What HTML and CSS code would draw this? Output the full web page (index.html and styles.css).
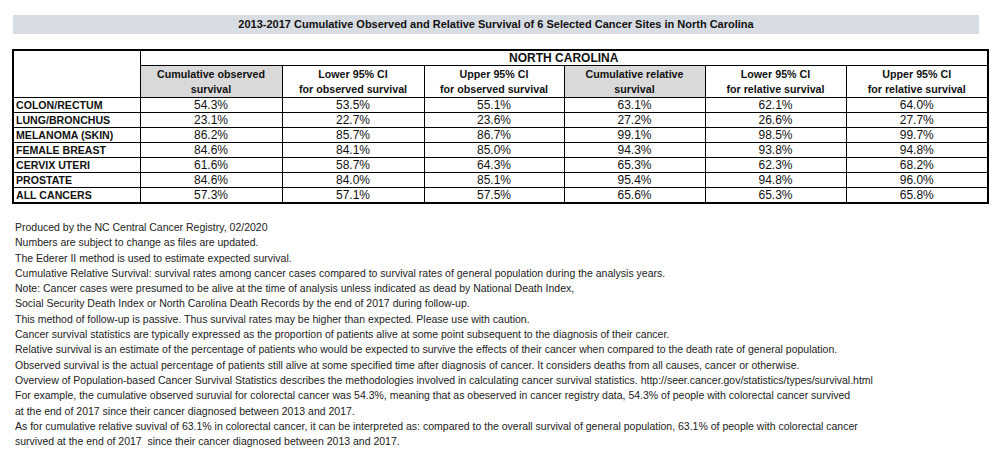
FILE: index.html
```html
<!DOCTYPE html>
<html>

<head lang="en">
    <meta charset="UTF-8">
    <title>NC Cancer Survival</title>
    <link rel="stylesheet" href="styles.css">
</head>

<body>
    <div class="report-title">2013-2017 Cumulative Observed and Relative Survival of 6 Selected Cancer Sites in North Carolina</div>
    <table class="survival-table">
        <colgroup>
            <col class="col-site">
            <col class="col-142">
            <col class="col-142">
            <col class="col-140">
            <col class="col-141">
            <col class="col-141">
            <col class="col-142">
        </colgroup>
        <thead>
            <tr>
                <th class="blank" rowspan="2"></th>
                <th class="state" colspan="6">NORTH CAROLINA</th>
            </tr>
            <tr class="head-row">
                <th class="shade">Cumulative observed<br>survival</th>
                <th>Lower 95% CI<br>for observed survival</th>
                <th>Upper 95% CI<br>for observed survival</th>
                <th class="shade">Cumulative relative<br>survival</th>
                <th>Lower 95% CI<br>for relative survival</th>
                <th>Upper 95% CI<br>for relative survival</th>
            </tr>
        </thead>
        <tbody>
            <tr><th>COLON/RECTUM</th><td>54.3%</td><td>53.5%</td><td>55.1%</td><td>63.1%</td><td>62.1%</td><td>64.0%</td></tr>
            <tr><th>LUNG/BRONCHUS</th><td>23.1%</td><td>22.7%</td><td>23.6%</td><td>27.2%</td><td>26.6%</td><td>27.7%</td></tr>
            <tr><th>MELANOMA (SKIN)</th><td>86.2%</td><td>85.7%</td><td>86.7%</td><td>99.1%</td><td>98.5%</td><td>99.7%</td></tr>
            <tr><th>FEMALE BREAST</th><td>84.6%</td><td>84.1%</td><td>85.0%</td><td>94.3%</td><td>93.8%</td><td>94.8%</td></tr>
            <tr><th>CERVIX UTERI</th><td>61.6%</td><td>58.7%</td><td>64.3%</td><td>65.3%</td><td>62.3%</td><td>68.2%</td></tr>
            <tr><th>PROSTATE</th><td>84.6%</td><td>84.0%</td><td>85.1%</td><td>95.4%</td><td>94.8%</td><td>96.0%</td></tr>
            <tr><th>ALL CANCERS</th><td>57.3%</td><td>57.1%</td><td>57.5%</td><td>65.6%</td><td>65.3%</td><td>65.8%</td></tr>
        </tbody>
    </table>
    <!-- notes under the table -->
    <div class="notes">
        <p>Produced by the NC Central Cancer Registry, 02/2020</p>
        <p>Numbers are subject to change as files are updated.</p>
        <p>The Ederer II method is used to estimate expected survival.</p>
        <p>Cumulative Relative Survival: survival rates among cancer cases compared to survival rates of general population during the analysis years.</p>
        <p>Note: Cancer cases were presumed to be alive at the time of analysis unless indicated as dead by National Death Index,</p>
        <p>Social Security Death Index or North Carolina Death Records by the end of 2017 during follow-up.</p>
        <p>This method of follow-up is passive. Thus survival rates may be higher than expected. Please use with caution.</p>
        <p>Cancer survival statistics are typically expressed as the proportion of patients alive at some point subsequent to the diagnosis of their cancer.</p>
        <p>Relative survival is an estimate of the percentage of patients who would be expected to survive the effects of their cancer when compared to the death rate of general population.</p>
        <p>Observed survival is the actual percentage of patients still alive at some specified time after diagnosis of cancer. It considers deaths from all causes, cancer or otherwise.</p>
        <p>Overview of Population-based Cancer Survival Statistics describes the methodologies involved in calculating cancer survival statistics. http://seer.cancer.gov/statistics/types/survival.html</p>
        <p>For example, the cumulative observed suruvial for colorectal cancer was 54.3%, meaning that as obeserved in cancer registry data, 54.3% of people with colorectal cancer survived</p>
        <p>at the end of 2017 since their cancer diagnosed between 2013 and 2017.</p>
        <p>As for cumulative relative suvival of 63.1% in colorectal cancer, it can be interpreted as: compared to the overall survival of general population, 63.1% of people with colorectal cancer</p>
        <p>survived at the end of 2017&nbsp; since their cancer diagnosed between 2013 and 2017.</p>
    </div>
</body>

</html>
```

FILE: styles.css
```css
* {
    padding: 0;
    margin: 0;
}

body {
    font-family: "Liberation Sans", Arial, sans-serif;
    color: #111;
    background: #ffffff;
    padding-top: 15px;
}

.report-title {
    margin-left: 13px;
    width: 966px;
    height: 19px;
    line-height: 19px;
    background: #d8dde3;
    text-align: center;
    font-size: 11px;
    font-weight: bold;
}

.survival-table {
    margin: 15px 0 0 12px;
    width: 976px;
    border-collapse: collapse;
    table-layout: fixed;
    border: 2px solid #000;
    font-size: 12px;
}

.col-site {
    width: 127px;
}

.col-142 {
    width: 142px;
}

.col-140 {
    width: 140px;
}

.col-141 {
    width: 141px;
}

.survival-table th,
.survival-table td {
    border: 1px solid #000;
    height: 14px;
    line-height: 14px;
    text-align: center;
    font-weight: normal;
}

.survival-table .state {
    font-weight: bold;
    font-size: 12px;
}

.head-row th {
    font-weight: bold;
    font-size: 10.7px;
    line-height: 15px;
    height: 31px;
}

.head-row .shade {
    background: #d9d9d9;
}

.survival-table tbody th {
    text-align: left;
    font-weight: bold;
    font-size: 10.6px;
    padding-left: 2px;
}

.notes {
    margin: 16px 0 0 15px;
    font-size: 10.5px;
    color: #222;
}

.notes p {
    height: 15.3px;
    line-height: 15.3px;
    white-space: nowrap;
}
```
